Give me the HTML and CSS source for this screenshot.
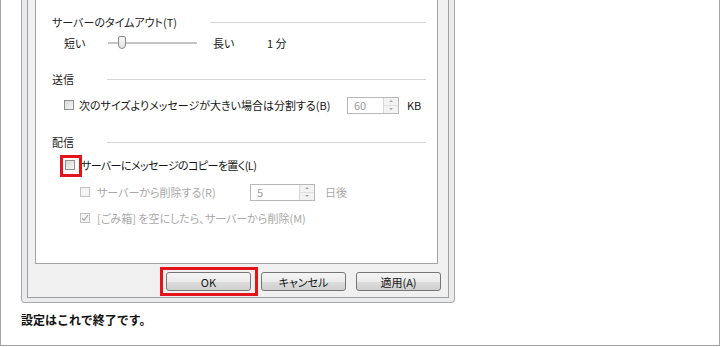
FILE: index.html
```html
<!DOCTYPE html>
<html lang="ja">
<head>
  <meta charset="UTF-8">
  <meta name="viewport" content="width=device-width, initial-scale=1.0">
  <title>配信の設定</title>
  <link rel="stylesheet" href="styles.css">
</head>
<body>
  <div class="sheet">
    <div class="window">
      <div class="frame">
        <div class="panel">
          <div class="group-title"><span>サーバーのタイムアウト(T)</span><i class="rule"></i></div>
          <div class="row slider-row">
            <span class="short">短い</span>
            <span class="slider"><span class="thumb"></span></span>
            <span class="long">長い</span>
            <span>1 分</span>
          </div>

          <div class="group-title second"><span>送信</span><i class="rule"></i></div>
          <div class="row split-row">
            <span class="cb"></span>
            <span class="split-label">次のサイズよりメッセージが大きい場合は分割する(B)</span>
            <span class="spin"><span class="val">60</span><span class="arrows"><i class="up"></i><i class="down"></i></span></span>
            <span class="unit">KB</span>
          </div>

          <div class="group-title third"><span>配信</span><i class="rule"></i></div>
          <div class="row copy-row">
            <span class="cb marked"></span>
            <span class="tight">サーバーにメッセージのコピーを置く(L)</span>
          </div>
          <div class="row sub-row disabled">
            <span class="cb"></span>
            <span class="del-label">サーバーから削除する(R)</span>
            <span class="spin wide"><span class="val">5</span><span class="arrows"><i class="up"></i><i class="down"></i></span></span>
            <span class="unit days">日後</span>
          </div>
          <div class="row sub-row last disabled">
            <span class="cb checked"><svg width="8" height="8" viewBox="0 0 8 8"><path d="M1 4.2 L3 6.3 L7 1.2" fill="none" stroke="#a8a8a8" stroke-width="1.3"/></svg></span>
            <span>[ごみ箱] を空にしたら、サーバーから削除(M)</span>
          </div>
        </div>

        <div class="buttons">
          <button class="btn marked">OK</button>
          <button class="btn">キャンセル</button>
          <button class="btn">適用(A)</button>
        </div>
      </div>
    </div>
    <p class="note">設定はこれで終了です。</p>
  </div>
</body>
</html>
```

FILE: styles.css
```css
body {
  margin: 0;
  padding: 0;
  background-color: #fff;
  font-family: "Noto Sans CJK JP", "Noto Sans", sans-serif;
  font-size: 11px;
  color: #151515;
  font-feature-settings: "palt";
}

.sheet {
  height: 346px;
  box-sizing: border-box;
  border: 1px solid #a3a3a3;
  border-top: none;
}

.window {
  margin-left: 20px;
  width: 434px;
  box-sizing: border-box;
  border: 1px solid #a9a9a9;
  border-top: none;
  border-radius: 0 0 4px 4px;
  background-color: #e9ebed;
  padding: 0 5px 4px 5px;
}

.frame {
  border: 1px solid #a0a0a0;
  border-top: none;
  background-color: #f0f0f0;
  padding: 0 7px 6px 7px;
}

.panel {
  margin-right: 3px;
  height: 264px;
  box-sizing: border-box;
  border: 1px solid #a4a4a4;
  border-top: none;
  background-color: #fff;
  padding: 12px 11px 0 16px;
}

.group-title {
  display: flex;
  align-items: center;
  height: 20px;
  color: #222;
}

.group-title .rule {
  flex: 1;
  height: 1px;
  margin-left: 33px;
  background-color: #d4d4d4;
}

.group-title.second {
  margin-top: 15px;
}

.group-title.third {
  margin-top: 16px;
}

.row {
  display: flex;
  align-items: center;
  height: 22px;
  padding-left: 12px;
}

.slider-row .short {
  width: 26px;
}

.slider {
  position: relative;
  width: 89px;
  height: 2px;
  margin: 0 16px 0 18px;
  background-color: #c4c4c4;
}

.slider .thumb {
  position: absolute;
  left: 10px;
  top: -6px;
  width: 6px;
  height: 11px;
  border: 1px solid #8a8a8a;
  border-radius: 2px 2px 4px 4px;
  background: linear-gradient(#fafafa, #e2e2e2);
}

.slider-row .long {
  width: 54px;
}

.split-row {
  margin-top: 5px;
}

.cb {
  display: inline-flex;
  align-items: center;
  justify-content: center;
  width: 10px;
  height: 10px;
  box-sizing: border-box;
  border: 1px solid #8f8f8f;
  background: linear-gradient(135deg, #d9d9d9, #f6f6f6);
  margin-right: 5px;
  position: relative;
}

.split-label {
  width: 268px;
}

.spin {
  display: inline-flex;
  width: 52px;
  height: 17px;
  box-sizing: border-box;
  border: 1px solid #b8b8b8;
  background-color: #fff;
  color: #9c9c9c;
}

.spin .val {
  flex: 1;
  padding-left: 6px;
  line-height: 15px;
}

.spin .arrows {
  width: 14px;
  display: flex;
  flex-direction: column;
  border-left: 1px solid #d6d6d6;
  background-color: #f3f3f3;
}

.spin .arrows i {
  flex: 1;
  display: flex;
  align-items: center;
  justify-content: center;
}

.spin .arrows i::before {
  content: "";
  border-left: 2px solid transparent;
  border-right: 2px solid transparent;
}

.spin .arrows .up {
  border-bottom: 1px solid #e0e0e0;
}

.spin .arrows .up::before {
  border-bottom: 2px solid #a5a5a5;
}

.spin .arrows .down::before {
  border-top: 2px solid #a5a5a5;
}

.unit {
  margin-left: 8px;
}

.copy-row {
  margin-top: 2px;
}

.copy-row .cb {
  margin-left: 1px;
  margin-right: 6px;
}

.tight {
  letter-spacing: -0.6px;
}

.cb.marked::after {
  content: "";
  position: absolute;
  left: -6px;
  top: -6px;
  width: 16px;
  height: 16px;
  border: 3px solid #e3141c;
}

.sub-row {
  padding-left: 28px;
  margin-top: 5px;
  color: #a8a8a8;
}

.sub-row.last {
  margin-top: 4px;
}

.disabled .cb {
  border-color: #c3c3c3;
  background: #f4f4f4;
  margin-right: 7px;
}

.del-label {
  width: 153px;
}

.spin.wide {
  width: 65px;
}

.unit.days {
  margin-left: 10px;
}

.buttons {
  display: flex;
  justify-content: flex-end;
  gap: 10px;
  margin-top: 8px;
}

.btn {
  position: relative;
  width: 85px;
  height: 19px;
  padding: 0;
  border: 1px solid #767676;
  border-radius: 3px;
  background: linear-gradient(#f4f4f4 0%, #ebebeb 50%, #dddddd 51%, #cfcfcf 100%);
  font-family: inherit;
  font-size: 11px;
  color: #151515;
  font-feature-settings: "palt";
}

.btn.marked::after {
  content: "";
  position: absolute;
  left: -7px;
  top: -6px;
  right: -8px;
  bottom: -6px;
  border: 3px solid #e3141c;
}

.note {
  margin: 9px 0 0 20px;
  font-size: 12px;
  font-weight: bold;
  line-height: 16px;
  color: #111;
  font-feature-settings: normal;
}
```
